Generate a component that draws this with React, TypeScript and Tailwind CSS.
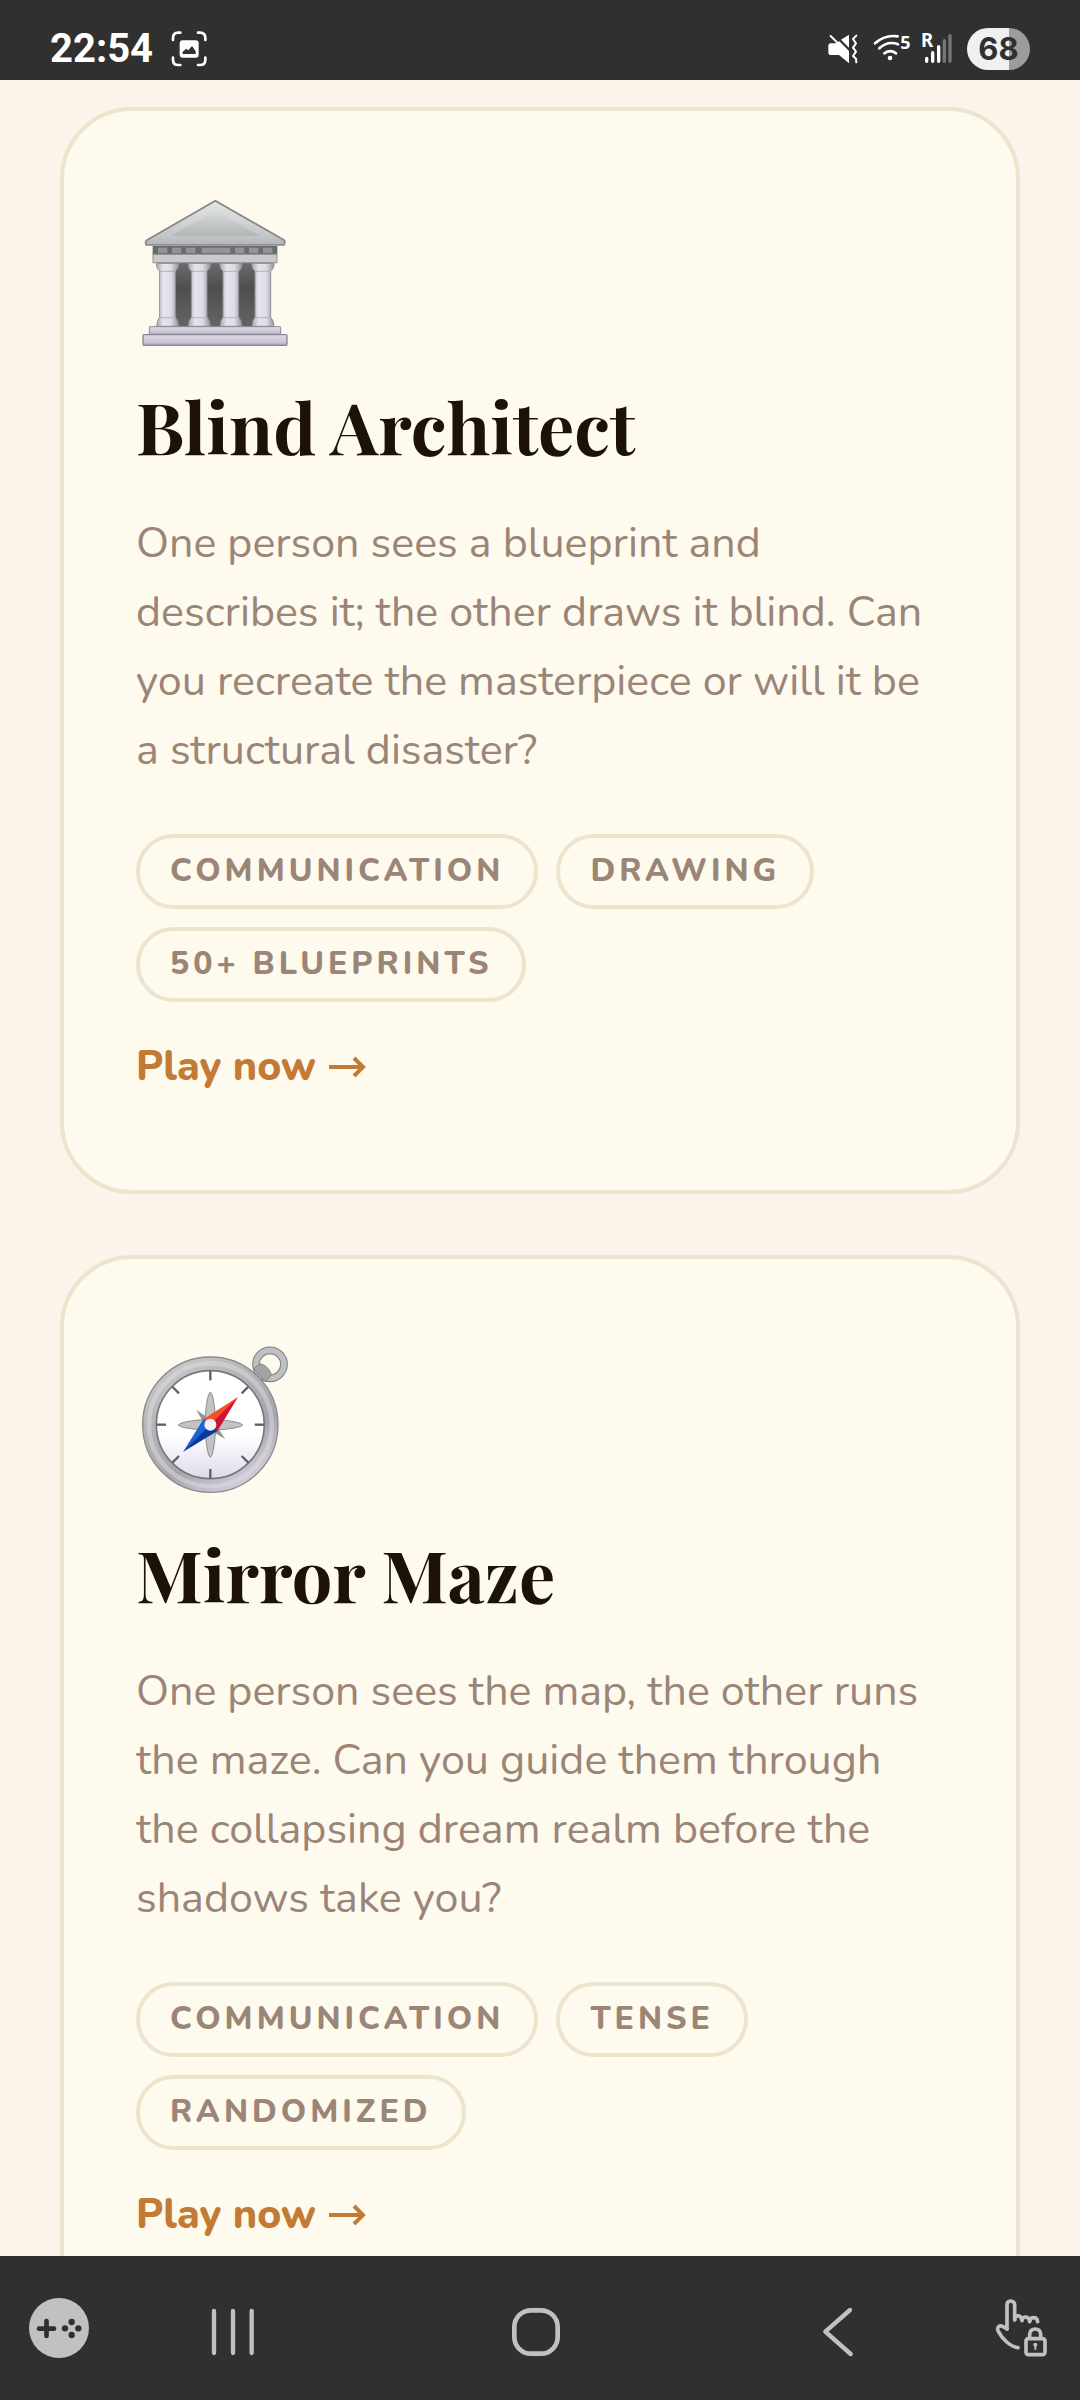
import React from "react";

function MuseumArt() {
  return (
    <svg className="block h-[180px] w-[160px]" viewBox="48 9 480 540" role="img" aria-label="Classical building">
      <defs>
        <linearGradient id="m-roof" x1="0" y1="0" x2="0" y2="1">
          <stop offset="0" stopColor="#e4e5e6" />
          <stop offset="0.8" stopColor="#c3c6c7" />
          <stop offset="1" stopColor="#b4b4b8" />
        </linearGradient>
        <linearGradient id="m-inner" x1="0" y1="0" x2="0" y2="1">
          <stop offset="0" stopColor="#d9dbdc" />
          <stop offset="1" stopColor="#b2b6b7" />
        </linearGradient>
        <linearGradient id="m-col" x1="0" y1="0" x2="1" y2="0">
          <stop offset="0" stopColor="#a9a8ae" />
          <stop offset="0.3" stopColor="#e6e4ec" />
          <stop offset="0.65" stopColor="#dedce4" />
          <stop offset="1" stopColor="#96959b" />
        </linearGradient>
        <linearGradient id="m-step" x1="0" y1="0" x2="0" y2="1">
          <stop offset="0" stopColor="#dedae6" />
          <stop offset="0.7" stopColor="#cbc5d5" />
          <stop offset="1" stopColor="#a49db0" />
        </linearGradient>
        <linearGradient id="m-gap" x1="0" y1="0" x2="0" y2="1">
          <stop offset="0" stopColor="#6d6d6f" />
          <stop offset="0.4" stopColor="#4e4e50" />
          <stop offset="1" stopColor="#656466" />
        </linearGradient>
      </defs>
      <rect x="125" y="245" width="325" height="196" fill="url(#m-gap)" />
      <path d="M286 62 L492 180 Q497 185 492 195 H79 Q74 186 80 181 Z" fill="url(#m-roof)" stroke="#858588" strokeWidth="5" strokeLinejoin="round" />
      <path d="M286 92 L420 167 H152 Z" fill="url(#m-inner)" />
      <rect x="98" y="198" width="374" height="27" fill="#6a6b6d" />
      {[114, 156, 198, 345, 387, 429].map((x) => (
        <rect key={x} x={x} y="203" width="28" height="16" fill="#929496" />
      ))}
      <rect x="245" y="203" width="86" height="16" fill="#929496" />
      <rect x="99" y="223" width="372" height="25" fill="#c9cacd" stroke="#939397" strokeWidth="3" />
      {[110, 205, 300, 396].map((x) => (
        <g key={x} transform={`translate(${x} 0)`}>
          <path d="M0 250 H66 V258 Q64 268 56 273 V412 Q65 420 66 439 H0 Q1 420 9 412 V273 Q1 268 0 258 Z" fill="url(#m-col)" stroke="#909096" strokeWidth="3" />
          <path d="M9 274 H56 M9 413 H56" stroke="#b3b1b9" strokeWidth="3" />
        </g>
      ))}
      <rect x="88" y="440" width="394" height="24" rx="2" fill="url(#m-step)" stroke="#8e8a96" strokeWidth="3" />
      <rect x="69" y="464" width="432" height="32" rx="3" fill="url(#m-step)" stroke="#8b8694" strokeWidth="4" />
    </svg>
  );
}

function CompassArt() {
  return (
    <svg className="block h-[180px] w-[160px]" viewBox="48 3 480 540" role="img" aria-label="Compass">
      <defs>
        <linearGradient id="c-rim" x1="0" y1="0" x2="0.6" y2="1">
          <stop offset="0" stopColor="#cfd0d2" />
          <stop offset="0.4" stopColor="#b5b6b8" />
          <stop offset="0.75" stopColor="#a5a4ac" />
          <stop offset="1" stopColor="#d0cad8" />
        </linearGradient>
        <linearGradient id="c-face" x1="0" y1="0" x2="0" y2="1">
          <stop offset="0.6" stopColor="#ffffff" />
          <stop offset="1" stopColor="#dfdaea" />
        </linearGradient>
        <linearGradient id="c-red" gradientUnits="userSpaceOnUse" x1="261" y1="274" x2="281" y2="294">
          <stop offset="0.45" stopColor="#f4502a" />
          <stop offset="0.55" stopColor="#cf1238" />
        </linearGradient>
        <linearGradient id="c-blue" gradientUnits="userSpaceOnUse" x1="261" y1="274" x2="281" y2="294">
          <stop offset="0.45" stopColor="#1e62d6" />
          <stop offset="0.55" stopColor="#08399c" />
        </linearGradient>
      </defs>
      <circle cx="450" cy="103" r="42" fill="none" stroke="#808084" strokeWidth="23" />
      <circle cx="450" cy="103" r="42" fill="none" stroke="#bfc0c2" strokeWidth="17" />
      <path d="M401 116 L420 101 Q446 108 454 134 L436 155 Z" fill="#a3a4a6" stroke="#808083" strokeWidth="3" />
      <circle cx="271" cy="284" r="203" fill="url(#c-rim)" stroke="#8b8b90" strokeWidth="4" />
      <circle cx="271" cy="284" r="184" fill="none" stroke="#dcdde0" strokeOpacity="0.5" strokeWidth="14" />
      <circle cx="271" cy="284" r="162" fill="url(#c-face)" stroke="#77777b" strokeWidth="5" />
      {[0, 45, 90, 135, 180, 225, 270, 315].map((a) => (
        <path key={a} d="M271 123 V151" stroke="#606064" strokeWidth="7" transform={`rotate(${a} 271 284)`} />
      ))}
      <path d="M228 239 L281 274 L316 328 L261 294 Z" fill="#929598" />
      <path d="M271 186 Q281 190 287 268 Q363 275 368 285 Q363 295 287 300 Q281 378 271 382 Q261 378 255 300 Q180 295 175 285 Q180 275 255 268 Q261 190 271 186 Z" fill="#c0c2c4" stroke="#8c8e91" strokeWidth="3" />
      <path d="M354 201 L251 267 L291 305 Z" fill="url(#c-red)" />
      <path d="M189 366 L251 266 L292 303 Z" fill="url(#c-blue)" />
      <circle cx="271" cy="284" r="18" fill="#f3f2f6" />
    </svg>
  );
}

function ArrowRight() {
  return (
    <svg className="h-[26px] w-[38px]" viewBox="0 0 38 26" fill="none" stroke="currentColor" strokeWidth="4" aria-hidden="true">
      <path d="M1 13 H35 M26 4 L35 13 L26 22" />
    </svg>
  );
}

function StatusBar() {
  return (
    <header className="flex h-20 shrink-0 items-center bg-[#303030] pt-[18px] pr-[50px] pl-[50px] text-white">
      <span className="font-['Roboto',sans-serif] text-[40px] leading-[42px] font-bold">22:54</span>
      <svg className="ml-[18px] h-9 w-9" viewBox="520 95 108 108" fill="none" stroke="white" strokeWidth="8" strokeLinecap="round" aria-hidden="true">
        <path d="M526 122 V116 Q526 100 542 100 H548 M601 100 H607 Q623 100 623 116 V122 M623 175 V181 Q623 197 607 197 H601 M548 197 H542 Q526 197 526 181 V175" />
        <rect x="546" y="123" width="57" height="52" rx="9" fill="white" stroke="none" />
        <path d="M555 164 V157 L566 148 L572 153 L583 140 L594 156 V164 Z" fill="#303030" stroke="none" />
      </svg>
      <div className="ml-auto flex items-center">
        <svg className="h-[42px] w-[33px]" viewBox="141 84 99 126" aria-label="Muted">
          <path d="M145 137 Q145 130 152 130 H168 L178 124 L207 153 V190 L177 165 H152 Q145 165 145 158 Z M183 119 L207 104 V143 Z" fill="white" />
          <path d="M152 108 L205 161" stroke="white" strokeWidth="6" strokeLinecap="round" />
          <path d="M229 107 L219 117 L228 130 L219 143 L228 155 L219 168 L228 176 L229 187" fill="none" stroke="white" strokeWidth="6" strokeLinecap="round" strokeLinejoin="round" />
        </svg>
        <svg className="ml-[13px] h-[42px] w-[38px]" viewBox="279 84 114 126" aria-label="Wi-Fi">
          <g fill="none" stroke="white" strokeWidth="8" strokeLinecap="round">
            <path d="M285 130 Q315 103 353 109" />
            <path d="M298 145 Q324 121 354 133" />
            <path d="M313 160 Q331 147 348 160" />
          </g>
          <circle cx="330" cy="174" r="7" fill="white" />
          <text x="361" y="146" fill="white" fontFamily="Noto Sans, sans-serif" fontWeight="700" fontSize="54">5</text>
        </svg>
        <svg className="ml-[10px] h-[42px] w-8" viewBox="423 84 96 126" aria-label="Mobile signal">
          <text x="423" y="141" fill="white" fontFamily="Noto Sans, sans-serif" fontWeight="700" fontSize="56">R</text>
          <g strokeWidth="10" strokeLinecap="round" stroke="white">
            <path d="M440 175 V184 M458 158 V184 M476 140 V184" />
            <path d="M493 122 V184 M510 107 V184" stroke="#767676" />
          </g>
        </svg>
        <span className="ml-[14px] flex h-[42px] w-[63px] items-center justify-center rounded-full bg-linear-to-r from-[#f0f0f0] from-67% to-[#9c9c9c] to-67% font-['Inter',sans-serif] text-[31px] font-bold text-[#303030]">
          68
        </span>
      </div>
    </header>
  );
}

function NavBar() {
  return (
    <nav className="flex h-36 shrink-0 items-center bg-[#303030]" aria-label="System navigation">
      <button className="flex w-[118px] justify-center" aria-label="Game tools">
        <svg className="h-[62px] w-16" viewBox="81 171 192 186">
          <circle cx="177" cy="264" r="90" fill="#c1c1c1" />
          <path d="M117 266 H162 M139.500 243 V288" stroke="#303030" strokeWidth="14" strokeLinecap="round" />
          <g fill="#303030">
            <circle cx="215" cy="246" r="9.500" />
            <circle cx="195" cy="265" r="9.500" />
            <circle cx="235" cy="265" r="9.500" />
            <circle cx="215" cy="285" r="9.500" />
          </g>
        </svg>
      </button>
      <div className="flex flex-1 items-center justify-between pr-[109px] pl-[93px]">
        <button aria-label="Recent apps">
          <svg className="h-[62px] w-11" viewBox="633 171 132 186" stroke="#c1c1c1" strokeWidth="13" strokeLinecap="round">
            <path d="M642 213 V339 M699 213 V339 M755 213 V339" />
          </svg>
        </button>
        <button aria-label="Home">
          <svg className="h-[62px] w-[50px]" viewBox="210 171 150 186" fill="none" stroke="#c1c1c1" strokeWidth="14">
            <rect x="220" y="211" width="130" height="130" rx="50" />
          </svg>
        </button>
        <button aria-label="Back">
          <svg className="h-[62px] w-[38px]" viewBox="108 171 114 186" fill="none" stroke="#c1c1c1" strokeWidth="13" strokeLinecap="round" strokeLinejoin="round">
            <path d="M210 210 L136 275 L212 342" />
          </svg>
        </button>
      </div>
      <button className="flex w-[117px] justify-center" aria-label="Touch lock">
        <svg className="h-[62px] w-[55px]" viewBox="642 171 165 186" fill="none" stroke="#c1c1c1" strokeWidth="11" strokeLinecap="round" strokeLinejoin="round">
          <path d="M681 267 V196 Q681 183 691 183 Q704 183 704 196 V239" />
          <path d="M704 239 C704 222 724 224 726 242 C727 226 747 228 749 245 C751 229 771 229 773 245" />
          <path d="M681 267 L669 260 C658 254 649 262 655 274 C665 293 688 320 714 323" />
          <rect x="738" y="296" width="57" height="48" rx="7" />
          <path d="M749 293 V283 Q750 267 766 267 Q781 267 782 283 V293" />
          <circle cx="766" cy="314" r="6" fill="#c1c1c1" stroke="none" />
          <path d="M766 316 V327" strokeWidth="6" />
        </svg>
      </button>
    </nav>
  );
}

type Game = { title: string; text: string; tags: string[]; art: React.ReactNode };

const games: Game[] = [
  {
    title: "Blind Architect",
    text: "One person sees a blueprint and describes it; the other draws it blind. Can you recreate the masterpiece or will it be a structural disaster?",
    tags: ["Communication", "Drawing", "50+ Blueprints"],
    art: <MuseumArt />,
  },
  {
    title: "Mirror Maze",
    text: "One person sees the map, the other runs the maze. Can you guide them through the collapsing dream realm before the shadows take you?",
    tags: ["Communication", "Tense", "Randomized"],
    art: <CompassArt />,
  },
];

function GameCard({ game }: { game: Game }) {
  return (
    <article className="rounded-[72px] border-4 border-[#ede4cd] bg-[#fffaee] px-[72px] pt-[72px] pb-[98px]">
      {game.art}
      <h2 className="mt-4 font-['Playfair_Display','Liberation_Serif',serif] text-[72px] leading-[92px] font-bold text-[#1c1209]">{game.title}</h2>
      <p className="mt-[38px] text-[43px] leading-[69px] text-[#9a8577]">{game.text}</p>
      <ul className="mt-[49px] flex flex-wrap gap-[18px]">
        {game.tags.map((tag) => (
          <li key={tag} className="rounded-full border-4 border-[#ede4cd] px-[30px] pt-[11px] pb-[13px] text-[32px] leading-[43px] font-extrabold tracking-[4px] text-[#9a8577] uppercase">
            {tag}
          </li>
        ))}
      </ul>
      <a href="#play" className="mt-10 flex w-fit items-center gap-3 text-[41px] leading-[50px] font-extrabold text-[#c27a35]">
        Play now
        <ArrowRight />
      </a>
    </article>
  );
}

export default function App() {
  return (
    <div className="flex h-screen flex-col bg-[#fcf3eb] font-['Nunito','Lato',sans-serif]">
      <StatusBar />
      <main className="min-h-0 flex-1 overflow-y-auto px-[60px] pt-[27px] [scrollbar-width:none]">
        <div className="flex flex-col gap-[61px]">
          {games.map((game) => (
            <GameCard key={game.title} game={game} />
          ))}
        </div>
      </main>
      <NavBar />
    </div>
  );
}
